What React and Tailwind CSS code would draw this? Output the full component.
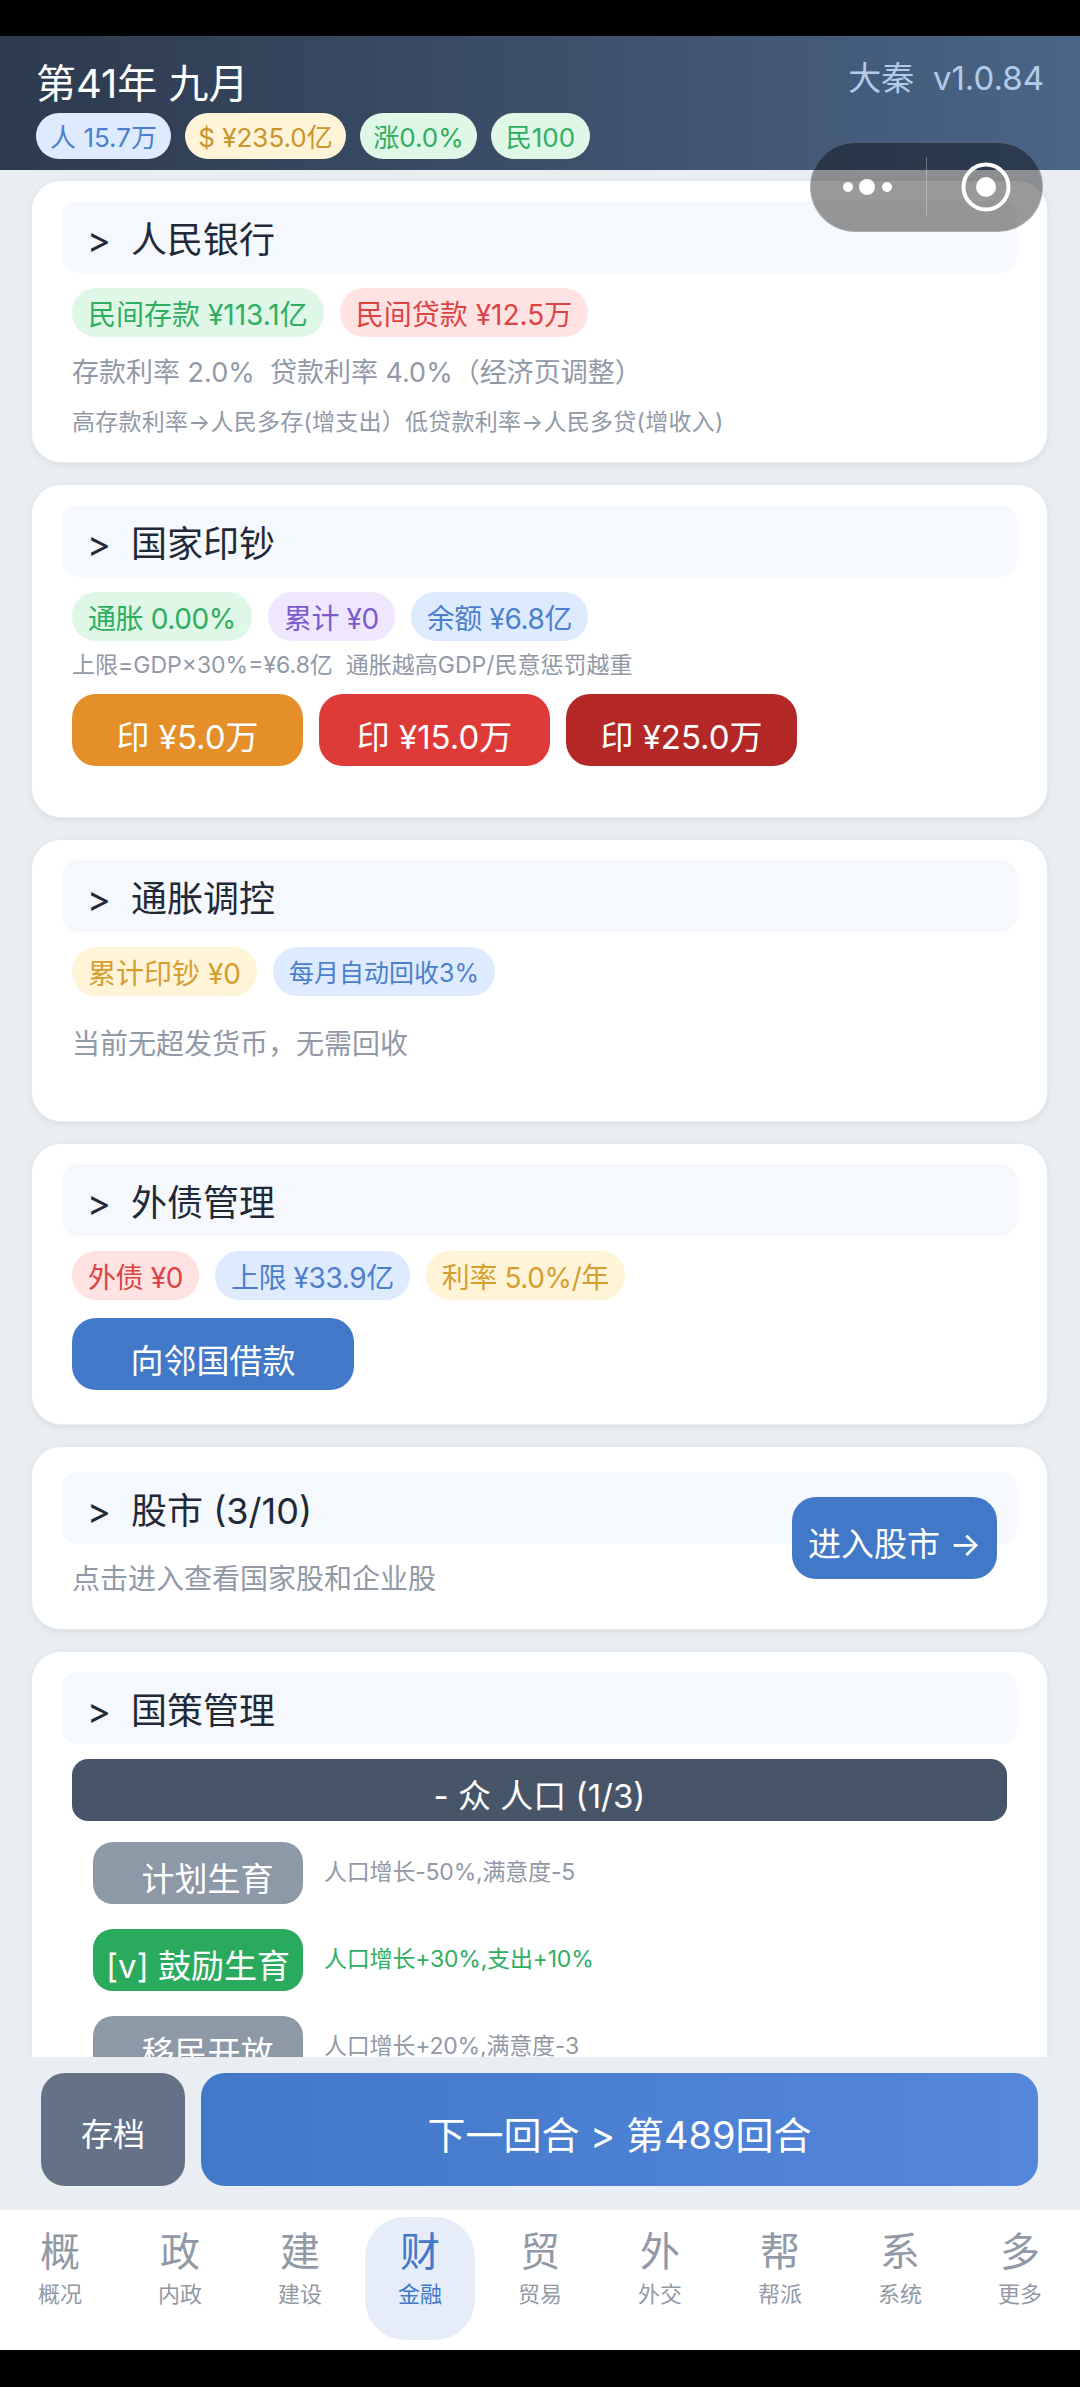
const FONT = "font-['Inter','Noto_Sans_CJK_SC',sans-serif]";

const CHIP = {
  green: "bg-[#dff7e6] text-[#2fae62]",
  red: "bg-[#ffe2e2] text-[#dc4444]",
  blue: "bg-[#deebfe] text-[#4c7fcb]",
  yellow: "bg-[#fff3d8] text-[#d49f2f]",
  purple: "bg-[#efe7fe] text-[#7b5ad0]",
};

const TABS = [
  ["概", "概况"],
  ["政", "内政"],
  ["建", "建设"],
  ["财", "金融"],
  ["贸", "贸易"],
  ["外", "外交"],
  ["帮", "帮派"],
  ["系", "系统"],
  ["多", "更多"],
];

function Chip({ tone, small, loose, children }) {
  return (
    <span
      className={`flex h-[49px] items-center rounded-[24px] px-[16px] pt-[5px] whitespace-pre ${
        small ? "text-[25px]" : "text-[28px]"
      } ${loose ? "" : "tracking-[-0.4px]"} ${CHIP[tone]}`}
    >
      {children}
    </span>
  );
}

function HeadChip({ className, children }) {
  return (
    <span className={`flex h-[46px] items-center justify-center rounded-[23px] pt-[3px] text-[26px] whitespace-pre ${className}`}>
      {children}
    </span>
  );
}

function SectionHead({ children }) {
  return (
    <div className="flex h-[72px] items-center rounded-[16px] bg-[#f5f8fc] pl-[25px] pt-[5px] text-[36px] text-[#1f2937] whitespace-pre">
      {">  "}
      {children}
    </div>
  );
}

function Card({ className = "", children }) {
  return (
    <section className={`rounded-[30px] border border-[#e6ebf0] bg-white px-[30px] shadow-[0_2px_6px_rgba(0,0,0,0.07)] ${className}`}>
      {children}
    </section>
  );
}

function ActionButton({ className, children }) {
  return (
    <button
      type="button"
      className={`flex h-[72px] items-center justify-center rounded-[24px] pt-[15px] text-[33px] text-white whitespace-pre ${className}`}
    >
      {children}
    </button>
  );
}

function PolicyRow({ active, label, desc, indent }) {
  return (
    <div className="flex h-[62px] shrink-0 items-start gap-[21px]">
      <button
        type="button"
        className={`flex h-[62px] w-[210px] shrink-0 items-center justify-center rounded-[20px] pt-[13px] text-[33px] text-white whitespace-pre ${
          active ? "bg-[#2aaa5c]" : "bg-[#8e99a8]"
        } ${indent ? "pl-[19px]" : ""}`}
      >
        {label}
      </button>
      <p className={`pt-[12px] text-[23px] leading-[36px] tracking-[-0.2px] ${active ? "text-[#2fae62]" : "text-[#9299a6]"}`}>{desc}</p>
    </div>
  );
}

function WxCapsule() {
  return (
    <div className="absolute left-[810px] top-[142px] h-[90px] w-[233px] rounded-[45px] border border-white/20 bg-black/40">
      <svg width="233" height="90" viewBox="0 0 233 90" fill="none" className="absolute left-[-1px] top-[-1px]">
        <circle cx="38" cy="45" r="5" fill="#fff" />
        <circle cx="57" cy="45" r="8" fill="#fff" />
        <circle cx="77" cy="45" r="5" fill="#fff" />
        <rect x="116" y="15" width="1" height="58" fill="#fff" fillOpacity="0.3" />
        <circle cx="176" cy="45" r="22.5" stroke="#fff" strokeWidth="4" />
        <circle cx="176" cy="45" r="10" fill="#fff" />
      </svg>
    </div>
  );
}

export default function App() {
  return (
    <div className={`relative flex h-[2387px] w-[1080px] flex-col overflow-hidden bg-black ${FONT}`}>
      <div className="h-[36px] shrink-0" />

      <header className="flex h-[134px] shrink-0 flex-col bg-gradient-to-r from-[#2d3a4e] to-[#4a6587] px-[36px]">
        <div className="flex h-[77px] justify-between">
          <h1 className="pt-[23px] text-[40px] leading-[50px] font-normal text-white whitespace-pre">第41年 九月</h1>
          <p className="pt-[20px] text-[33px] leading-[44px] text-[#b3cbe9] whitespace-pre">大秦  v1.0.84</p>
        </div>
        <div className="flex gap-[14px]">
          <HeadChip className="w-[135px] bg-[#deebfe] text-[#4c7fcb]">人 15.7万</HeadChip>
          <HeadChip className="w-[161px] bg-[#fff3d8] text-[#c9952a]">$ ¥235.0亿</HeadChip>
          <HeadChip className="w-[117px] bg-[#dff7e6] text-[#2fae62]">涨0.0%</HeadChip>
          <HeadChip className="w-[99px] bg-[#dff7e6] text-[#2fae62]">民100</HeadChip>
        </div>
      </header>

      <main className="flex h-[1887px] shrink-0 flex-col gap-[21px] overflow-hidden bg-[#e9eef3] pl-[31px] pr-[32px] pt-[10px]">
        <Card className="shrink-0 pt-[20px] pb-[23px]">
          <SectionHead>人民银行</SectionHead>
          <div className="mt-[15px] flex gap-[16px] px-[10px]">
            <Chip tone="green" loose>民间存款 ¥113.1亿</Chip>
            <Chip tone="red" loose>民间贷款 ¥12.5万</Chip>
          </div>
          <p className="mt-[16px] px-[10px] text-[27px] leading-[40px] text-[#9299a6] whitespace-pre">存款利率 2.0%  贷款利率 4.0%（经济页调整）</p>
          <p className="mt-[12px] px-[10px] text-[23px] leading-[34px] tracking-[0.25px] text-[#9299a6] whitespace-pre">高存款利率→人民多存(增支出）低贷款利率→人民多贷(增收入)</p>
        </Card>

        <Card className="shrink-0 pt-[20px] pb-[51px]">
          <SectionHead>国家印钞</SectionHead>
          <div className="mt-[15px] flex gap-[16px] px-[10px]">
            <Chip tone="green">通胀 0.00%</Chip>
            <Chip tone="purple">累计 ¥0</Chip>
            <Chip tone="blue">余额 ¥6.8亿</Chip>
          </div>
          <p className="mt-[7px] px-[10px] text-[23px] leading-[34px] text-[#9299a6] whitespace-pre">上限=GDP×30%=¥6.8亿  通胀越高GDP/民意惩罚越重</p>
          <div className="mt-[12px] flex gap-[16px] px-[10px]">
            <ActionButton className="w-[231px] bg-[#e58f2a]">印 ¥5.0万</ActionButton>
            <ActionButton className="w-[231px] bg-[#de3a37]">印 ¥15.0万</ActionButton>
            <ActionButton className="w-[231px] bg-[#b32826]">印 ¥25.0万</ActionButton>
          </div>
        </Card>

        <Card className="shrink-0 pt-[20px] pb-[57px]">
          <SectionHead>通胀调控</SectionHead>
          <div className="mt-[15px] flex gap-[16px] px-[10px]">
            <Chip tone="yellow" loose>累计印钞 ¥0</Chip>
            <Chip tone="blue" small loose>每月自动回收3%</Chip>
          </div>
          <p className="mt-[28px] px-[10px] text-[28px] leading-[40px] text-[#9299a6]">当前无超发货币，无需回收</p>
        </Card>

        <Card className="shrink-0 pt-[20px] pb-[34px]">
          <SectionHead>外债管理</SectionHead>
          <div className="mt-[15px] flex gap-[16px] px-[10px]">
            <Chip tone="red">外债 ¥0</Chip>
            <Chip tone="blue">上限 ¥33.9亿</Chip>
            <Chip tone="yellow">利率 5.0%/年</Chip>
          </div>
          <div className="mt-[18px] px-[10px]">
            <ActionButton className="w-[282px] bg-[#4178c8]">向邻国借款</ActionButton>
          </div>
        </Card>

        <Card className="relative shrink-0 pt-[25px] pb-[30px]">
          <SectionHead>股市 (3/10)</SectionHead>
          <p className="mt-[15px] px-[10px] text-[28px] leading-[40px] text-[#9299a6]">点击进入查看国家股和企业股</p>
          <button
            type="button"
            className="absolute left-[760px] top-[50px] flex h-[82px] w-[205px] items-center justify-center rounded-[24px] bg-[#4178c8] pt-[14px] text-[33px] text-white whitespace-pre"
          >
            进入股市 →
          </button>
        </Card>

        <Card className="shrink-0 pt-[20px] pb-[40px]">
          <SectionHead>国策管理</SectionHead>
          <div className="mx-[10px] mt-[15px] flex h-[62px] items-center justify-center rounded-[16px] bg-[#475569] pt-[14px] text-[33px] text-white whitespace-pre">
            - 众 人口 (1/3)
          </div>
          <div className="mt-[21px] flex flex-col gap-[25px] pl-[31px]">
            <PolicyRow label="计划生育" desc="人口增长-50%,满意度-5" indent />
            <PolicyRow active label="[v] 鼓励生育" desc="人口增长+30%,支出+10%" />
            <PolicyRow label="移民开放" desc="人口增长+20%,满意度-3" indent />
          </div>
        </Card>
      </main>

      <div className="flex h-[152px] shrink-0 gap-[16px] bg-[#e9eef3] pl-[41px] pr-[42px] pt-[16px]">
        <button type="button" className="flex h-[113px] w-[144px] items-center justify-center rounded-[24px] bg-[#647186] pt-[10px] text-[32px] text-white">
          存档
        </button>
        <button type="button" className="flex h-[113px] flex-1 items-center justify-center rounded-[24px] bg-gradient-to-r from-[#4178c8] to-[#5587da] pt-[12px] text-[38px] text-white">
          下一回合 &gt; 第489回合
        </button>
      </div>

      <nav className="grid h-[141px] shrink-0 grid-cols-9 border-t border-[#eef1f5] bg-white">
        {TABS.map(([glyph, label]) => {
          const active = label === "金融";
          return (
            <div key={label} className="flex justify-center pt-[7px]">
              <div className={`flex h-[123px] w-[110px] flex-col items-center rounded-[40px] pt-[7px] ${active ? "bg-[#e6edf9]" : ""}`}>
                <span className={`text-[40px] leading-[56px] ${active ? "text-[#4178c8]" : "text-[#9299a6]"}`}>{glyph}</span>
                <span className={`text-[22px] leading-[29px] ${active ? "text-[#4178c8]" : "text-[#9299a6]"}`}>{label}</span>
              </div>
            </div>
          );
        })}
      </nav>

      <div className="flex-1" />
      <WxCapsule />
    </div>
  );
}
